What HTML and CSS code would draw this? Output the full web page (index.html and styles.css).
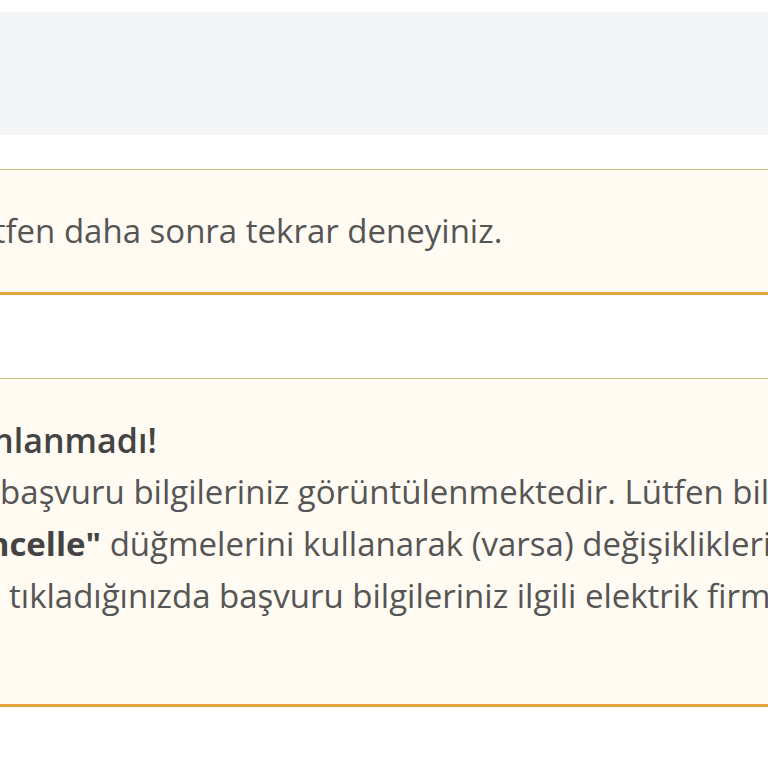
FILE: index.html
```html
<!DOCTYPE html>
<html lang="tr">
<head>
    <meta charset="utf-8">
    <link rel="stylesheet" href="styles.css">
</head>
<body>
    <div class="page">
        <div class="topbar"></div>

        <!-- hata mesajı -->
        <div class="alert alert-short">
            <p class="alert-text">Bir sorun oluştu. Lütfen daha sonra tekrar deneyiniz.</p>
        </div>

        <!-- başvuru uyarısı -->
        <div class="alert alert-long">
            <p class="alert-title">Başvurunuz tamamlanmadı!</p>
            <p class="alert-text">
                <span class="line">Bu ekranda mevcut başvuru bilgileriniz görüntülenmektedir. Lütfen bilgilerinizi kontrol ediniz.</span>
                <span class="line"><b>"Kaydet"</b> veya <b>"Güncelle"</b> düğmelerini kullanarak (varsa) değişiklikleri kaydediniz.</span>
                <span class="line"><b>"Onayla"</b> butonuna tıkladığınızda başvuru bilgileriniz ilgili elektrik firmasına iletilecektir.</span>
            </p>
        </div>
    </div>
</body>
</html>
```

FILE: styles.css
```css
*{
    margin: 0;
    box-sizing: border-box;
}
body {
    background-color: #fff;
    overflow: hidden;
    font-family: "Open Sans", "Liberation Sans", sans-serif;
    font-size: 33px;
    line-height: 52px;
    color: #555;
}
.page {
    margin-left: -307px;
    width: 1600px;
    padding-top: 12px;
}
.topbar {
    height: 123px;
    background-color: #f4f5f7;
    margin-bottom: 34px;
}
.alert {
    background-color: #fffaf2;
    border-top: 1px solid #cdbd7e;
    border-bottom: 3px solid #e5a43b;
    padding: 35px 0;
}
.alert-long {
    margin-top: 83px;
    padding-bottom: 82px;
}
.alert-text {
    white-space: nowrap;
}
.alert-title {
    font-size: 34px;
    font-weight: 600;
    color: #444;
}
.line {
    display: block;
}
.line b {
    font-weight: 700;
    color: #444;
}
```
